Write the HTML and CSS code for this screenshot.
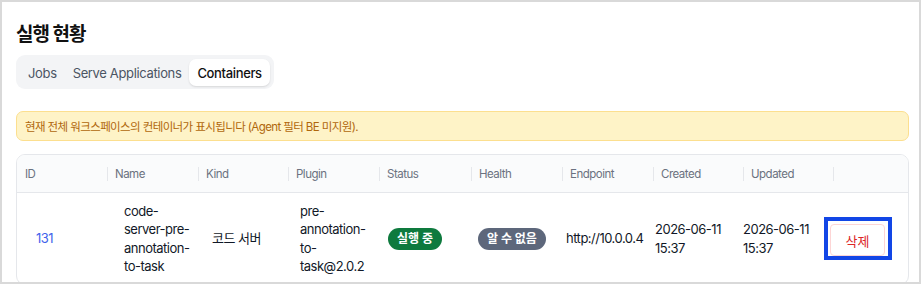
FILE: index.html
```html
<!DOCTYPE html>
<html lang="ko">
<head>
  <meta charset="UTF-8">
  <title>실행 현황</title>
  <link rel="stylesheet" href="styles.css">
</head>
<body>
  <div class="frame">
    <h1 class="title">실행 현황</h1>

    <div class="tabs">
      <button class="tab">Jobs</button>
      <button class="tab">Serve Applications</button>
      <button class="tab active">Containers</button>
    </div>

    <div class="notice">현재 전체 워크스페이스의 컨테이너가 표시됩니다 (Agent 필터 BE 미지원).</div>

    <div class="card">
      <div class="thead">
        <div class="th first">ID</div>
        <div class="th">Name</div>
        <div class="th">Kind</div>
        <div class="th">Plugin</div>
        <div class="th">Status</div>
        <div class="th">Health</div>
        <div class="th">Endpoint</div>
        <div class="th">Created</div>
        <div class="th">Updated</div>
        <div class="th"></div>
      </div>
      <div class="trow">
        <div class="td id"><a href="#">131</a></div>
        <div class="td narrow">code-server-pre-annotation-to-task</div>
        <div class="td">코드 서버</div>
        <div class="td">pre-annotation-to-task@2.0.2</div>
        <div class="td"><span class="badge running">실행 중</span></div>
        <div class="td"><span class="badge unknown">알 수 없음</span></div>
        <div class="td nowrap">http://10.0.0.4</div>
        <div class="td">2026-06-11 15:37</div>
        <div class="td">2026-06-11 15:37</div>
        <div class="td action">
          <span class="focus"><button class="delete">삭제</button></span>
        </div>
      </div>
    </div>
  </div>
</body>
</html>
```

FILE: styles.css
```css
html, body {
  margin: 0;
  background: #ffffff;
}
body {
  font-family: Inter, "Noto Sans CJK KR", sans-serif;
  color: #111827;
}
.frame {
  box-sizing: border-box;
  width: 921px;
  height: 284px;
  overflow: hidden;
  border: 2px solid #d9d9d9;
  padding: 19px 10px 0 14px;
}
.title {
  margin: 0;
  font-size: 19px;
  line-height: 28px;
  font-weight: 700;
  letter-spacing: -1px;
  color: #111111;
}
.tabs {
  display: inline-flex;
  margin-top: 6px;
  padding: 4px 4px 3px 4px;
  background: #f3f4f6;
  border-radius: 9px;
}
.tab {
  font-family: inherit;
  font-size: 13px;
  letter-spacing: -0.35px;
  height: 27px;
  padding: 0 8px;
  border: none;
  border-radius: 7px;
  background: transparent;
  color: #4b5563;
}
.tab.active {
  background: #ffffff;
  color: #111111;
  font-weight: 500;
  box-shadow: 0 1px 2px rgba(0, 0, 0, 0.12);
}
.notice {
  margin-top: 22px;
  height: 30px;
  box-sizing: border-box;
  display: flex;
  align-items: center;
  padding: 0 8px;
  background: #fef3c7;
  border: 1px solid #fcdf8f;
  border-radius: 7px;
  color: #b0670c;
  font-size: 11.5px;
  letter-spacing: -0.6px;
}
.card {
  margin-top: 13px;
  border: 1px solid #e5e7eb;
  border-radius: 9px;
  overflow: hidden;
}
.thead {
  display: grid;
  grid-template-columns: 90px 91px 90px 91px 92px 91px 91px 90px 90px 1fr;
  height: 37px;
  background: #fafbfc;
  border-bottom: 1px solid #e5e7eb;
}
.th {
  display: flex;
  align-items: center;
  gap: 7px;
  font-size: 11.5px;
  letter-spacing: -0.5px;
  color: #6b7280;
}
.th::before {
  content: "";
  width: 1px;
  height: 14px;
  background: #e5e7eb;
}
.th.first {
  padding-left: 8px;
}
.th.first::before {
  display: none;
}
.trow {
  display: grid;
  grid-template-columns: 99px 88px 88px 88px 90px 88px 89px 88px 89px 1fr;
  align-items: center;
  height: 91px;
}
.td {
  padding: 0 8px;
  font-size: 13px;
  letter-spacing: -0.5px;
  line-height: 18.3px;
  color: #111827;
}
.td.narrow {
  padding-right: 12px;
}
.td.nowrap {
  white-space: nowrap;
}
.td.id {
  padding-left: 19px;
}
.td.id a {
  color: #4263eb;
  text-decoration: none;
}
.badge {
  display: inline-block;
  height: 22px;
  line-height: 22px;
  padding: 0 9px;
  border-radius: 11px;
  color: #ffffff;
  font-size: 12px;
  font-weight: 700;
  letter-spacing: 0;
  white-space: nowrap;
}
.badge.running {
  background: #0e7a3e;
}
.badge.unknown {
  background: #5d677b;
}
.td.action {
  padding: 0;
}
.focus {
  display: inline-block;
  border: 4px solid #1246e6;
  padding: 3px 3px 0 2px;
}
.delete {
  display: block;
  width: 55px;
  height: 32px;
  font-family: inherit;
  font-size: 13px;
  color: #dc2626;
  background: #ffffff;
  border: 1px solid #fdd5d5;
  border-radius: 4px;
}
```
